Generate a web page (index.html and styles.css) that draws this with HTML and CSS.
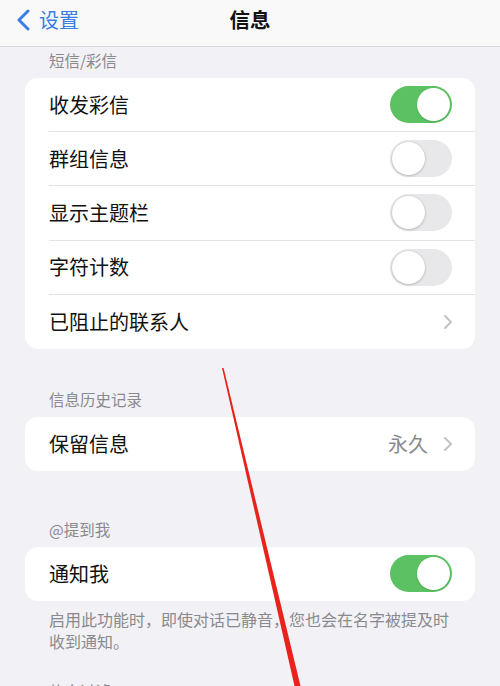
FILE: index.html
```html
<!DOCTYPE html>
<html lang="zh-CN">
<head>
<meta charset="utf-8">
<title>信息</title>
<link rel="stylesheet" href="styles.css">
</head>
<body>
  <div class="nav">
    <div class="nav-back">
      <svg width="16" height="22" viewBox="0 0 16 22"><path d="M13 2 L4 11 L13 20" fill="none" stroke="#3a7de3" stroke-width="3" stroke-linecap="round" stroke-linejoin="round"/></svg>
      <span>设置</span>
    </div>
    <div class="nav-title">信息</div>
  </div>

  <div class="page">
    <div class="group-head first">短信/彩信</div>
    <div class="group">
      <div class="row"><span class="label">收发彩信</span><span class="switch on"></span></div>
      <div class="row"><span class="label">群组信息</span><span class="switch"></span></div>
      <div class="row"><span class="label">显示主题栏</span><span class="switch"></span></div>
      <div class="row"><span class="label">字符计数</span><span class="switch"></span></div>
      <div class="row"><span class="label">已阻止的联系人</span>
        <svg class="chev" width="10" height="16" viewBox="0 0 10 16"><path d="M2 2 L8 8 L2 14" fill="none" stroke="#c3c3c6" stroke-width="2" stroke-linecap="round" stroke-linejoin="round"/></svg>
      </div>
    </div>

    <div class="group-head second">信息历史记录</div>
    <div class="group">
      <div class="row"><span class="label">保留信息</span>
        <span class="value">永久</span>
        <svg class="chev" width="10" height="16" viewBox="0 0 10 16"><path d="M2 2 L8 8 L2 14" fill="none" stroke="#c3c3c6" stroke-width="2" stroke-linecap="round" stroke-linejoin="round"/></svg>
      </div>
    </div>

    <div class="group-head third">@提到我</div>
    <div class="group">
      <div class="row"><span class="label">通知我</span><span class="switch on"></span></div>
    </div>
    <div class="group-foot">启用此功能时，即使对话已静音，您也会在名字被提及时<br>收到通知。</div>

    <div class="group-head fourth">信息过滤</div>
  </div>

  <!-- hand-drawn red pointer line on top of the list -->
  <svg class="marker" width="500" height="686" viewBox="0 0 500 686">
    <polygon points="222,368 223.6,368 300.5,686 294.5,686" fill="#e8231c"/>
  </svg>
</body>
</html>
```

FILE: styles.css
```css
html, body { margin: 0; padding: 0; }
body {
  width: 500px;
  height: 686px;
  overflow: hidden;
  background: #f2f1f6;
  font-family: "Noto Sans CJK SC", "Noto Sans", sans-serif;
  color: #111;
  position: relative;
}

.nav {
  height: 46px;
  background: #f9f9f9;
  border-bottom: 1px solid #d9d9dc;
  display: flex;
  align-items: center;
  position: relative;
}
.nav-back {
  display: flex;
  align-items: center;
  gap: 8px;
  padding-left: 15px;
  color: #3a7de3;
  font-size: 20px;
  line-height: 24px;
  margin-top: -6px;
}
.nav-title {
  position: absolute;
  left: 0;
  right: 0;
  top: 5px;
  text-align: center;
  font-size: 20.5px;
  font-weight: 700;
  line-height: 28px;
  pointer-events: none;
}

.page { padding: 0 25px; }

.group-head {
  padding: 0 0 7px 24px;
  font-size: 15.5px;
  line-height: 22px;
  color: #8a8a8e;
}
.group-head.first { padding-top: 2px; }
.group-head.second { margin-top: 39px; }
.group-head.third { margin-top: 47px; }
.group-head.fourth { margin-top: 28px; }

.group {
  background: #fff;
  border-radius: 13px;
  padding-left: 24px;
  overflow: hidden;
}
.row {
  height: 54.2px;
  display: flex;
  align-items: center;
  padding-right: 23px;
  border-bottom: 1px solid #e4e4e7;
  box-sizing: border-box;
}
.row:last-child { border-bottom: none; height: 54px; }
.label {
  flex: 1;
  font-size: 20px;
  line-height: 28px;
}
.value {
  font-size: 20px;
  color: #8b8b8f;
  margin-right: 15px;
}
.chev { margin-right: -1px; }

.switch {
  width: 62px;
  height: 37px;
  border-radius: 19px;
  background: #e8e8ea;
  position: relative;
  flex: none;
}
.switch::after {
  content: "";
  position: absolute;
  top: 2px;
  left: 2px;
  width: 33px;
  height: 33px;
  border-radius: 50%;
  background: #fff;
  box-shadow: 0 1px 3px rgba(0,0,0,0.2), 0 0 0 0.5px rgba(0,0,0,0.06);
}
.switch.on { background: #5cc162; }
.switch.on::after { left: 27px; box-shadow: 0 1px 2px rgba(0,0,0,0.12); }

.group-foot {
  padding: 7px 0 0 24px;
  font-size: 16px;
  line-height: 22px;
  color: #8a8a8e;
  white-space: nowrap;
}

.marker {
  position: absolute;
  left: 0;
  top: 0;
  pointer-events: none;
}
```
